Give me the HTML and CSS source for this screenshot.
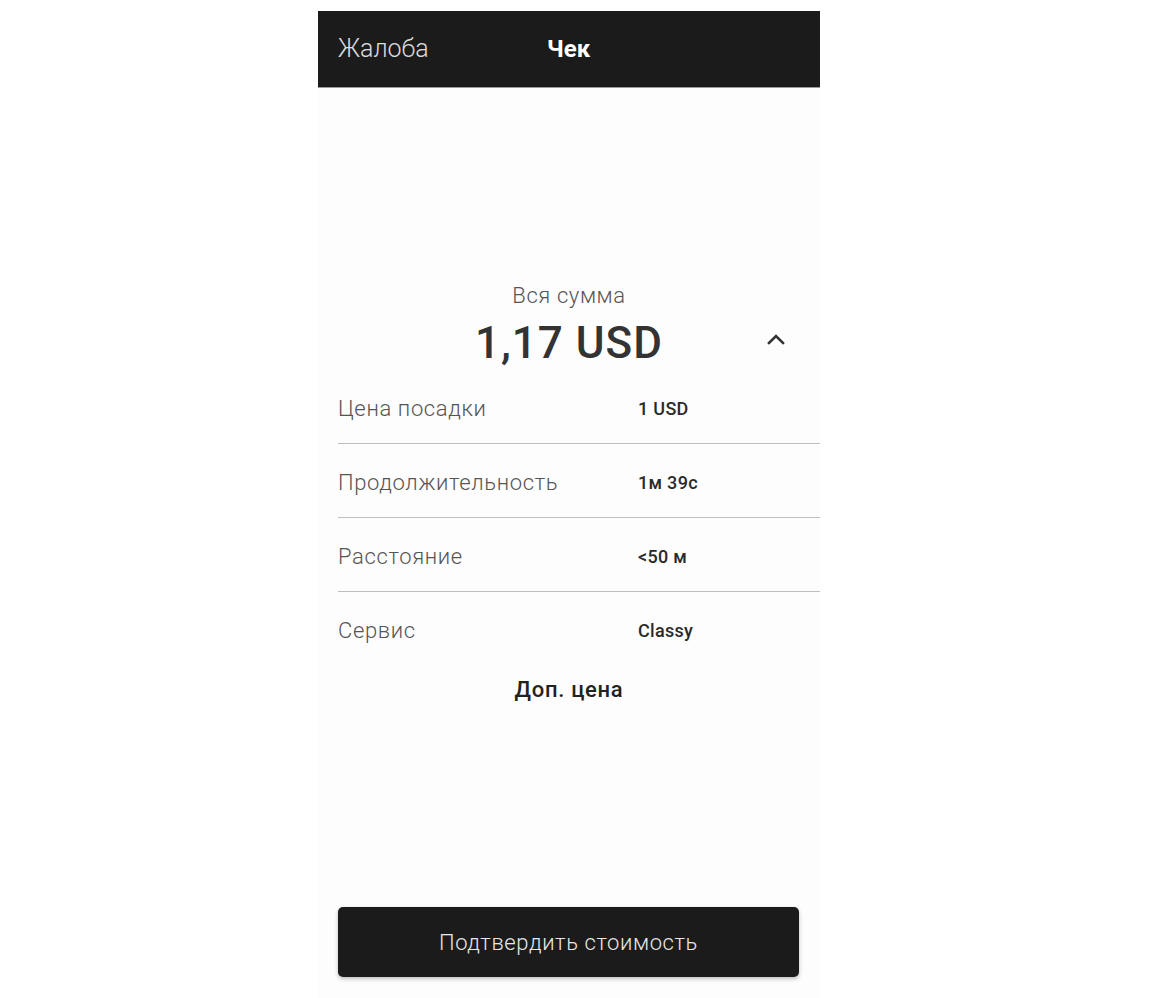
FILE: index.html
```html
<!DOCTYPE html>
<html lang="ru">
<head>
<meta charset="utf-8">
<title>Чек</title>
<link rel="stylesheet" href="styles.css">
</head>
<body>
<div class="screen">
  <header class="topbar">
    <div class="tab tab-first">Жалоба</div>
    <div class="tab tab-active">Чек</div>
  </header>
  <main class="content">
    <div class="total-label">Вся сумма</div>
    <div class="total-row">
      <div></div>
      <div class="total-amount">1,17 USD</div>
      <div class="chevron">
        <svg width="20" height="12" viewBox="0 0 20 12"><path d="M3 10 L10 3 L17 10" fill="none" stroke="#333" stroke-width="2.6" stroke-linecap="square"/></svg>
      </div>
    </div>
    <div class="details">
      <div class="row"><span class="label">Цена посадки</span><span class="value">1 USD</span></div>
      <div class="row"><span class="label">Продолжительность</span><span class="value">1м 39с</span></div>
      <div class="row"><span class="label">Расстояние</span><span class="value">&lt;50 м</span></div>
      <div class="row row-last"><span class="label">Сервис</span><span class="value">Classy</span></div>
    </div>
    <div class="extra">Доп. цена</div>
    <div class="spacer"></div>
    <button class="confirm">Подтвердить стоимость</button>
  </main>
</div>
</body>
</html>
```
FILE: styles.css
```css
html, body {
  margin: 0;
  padding: 0;
  background: #ffffff;
}
body {
  font-family: Roboto, "Noto Sans", sans-serif;
}
.screen {
  width: 502px;
  height: 987px;
  margin: 11px 0 0 318px;
  background: #fdfdfd;
  display: flex;
  flex-direction: column;
}
.topbar {
  height: 76px;
  background: #1b1b1b;
  border-bottom: 1px solid #9a9a9a;
  display: flex;
  align-items: center;
  padding-left: 20px;
  flex-shrink: 0;
}
.tab {
  color: #dcdcdc;
  font-size: 25px;
  font-weight: 300;
  line-height: 28px;
}
.tab-first {
  width: 209px;
}
.tab-active {
  color: #ffffff;
  font-weight: 700;
  font-size: 24px;
}
.content {
  flex: 1;
  display: flex;
  flex-direction: column;
  padding-top: 195px;
}
.total-label {
  text-align: center;
  font-size: 22px;
  font-weight: 300;
  line-height: 26px;
  letter-spacing: 0.6px;
  color: #555;
}
.total-row {
  display: grid;
  grid-template-columns: 1fr auto 1fr;
  align-items: center;
  margin-top: 8px;
}
.total-amount {
  font-size: 44px;
  font-weight: 500;
  line-height: 52px;
  letter-spacing: 1px;
  color: #333;
}
.chevron {
  justify-self: end;
  margin-right: 34px;
  display: flex;
  padding-bottom: 9px;
}
.details {
  margin-top: 1px;
  padding-left: 20px;
}
.row {
  display: flex;
  align-items: center;
  padding: 26px 0 21px;
  line-height: 26px;
  border-bottom: 1px solid #bdbdbd;
}
.row-last {
  border-bottom: none;
}
.label {
  width: 300px;
  font-size: 22px;
  font-weight: 300;
  letter-spacing: 0.65px;
  color: #555;
}
.value {
  font-size: 18px;
  font-weight: 500;
  letter-spacing: 0.3px;
  color: #2a2a2a;
}
.extra {
  margin-top: 12px;
  text-align: center;
  font-size: 22px;
  font-weight: 500;
  line-height: 26px;
  letter-spacing: 0.7px;
  color: #222;
}
.spacer {
  flex: 1;
}
.confirm {
  margin: 0 21px 21px 20px;
  height: 70px;
  border: none;
  border-radius: 5px;
  background: #1b1b1b;
  color: #e8e8e8;
  font-family: Roboto, "Noto Sans", sans-serif;
  font-size: 22px;
  font-weight: 300;
  letter-spacing: 0.6px;
  box-shadow: 0 2px 4px rgba(0, 0, 0, 0.25);
}
```
